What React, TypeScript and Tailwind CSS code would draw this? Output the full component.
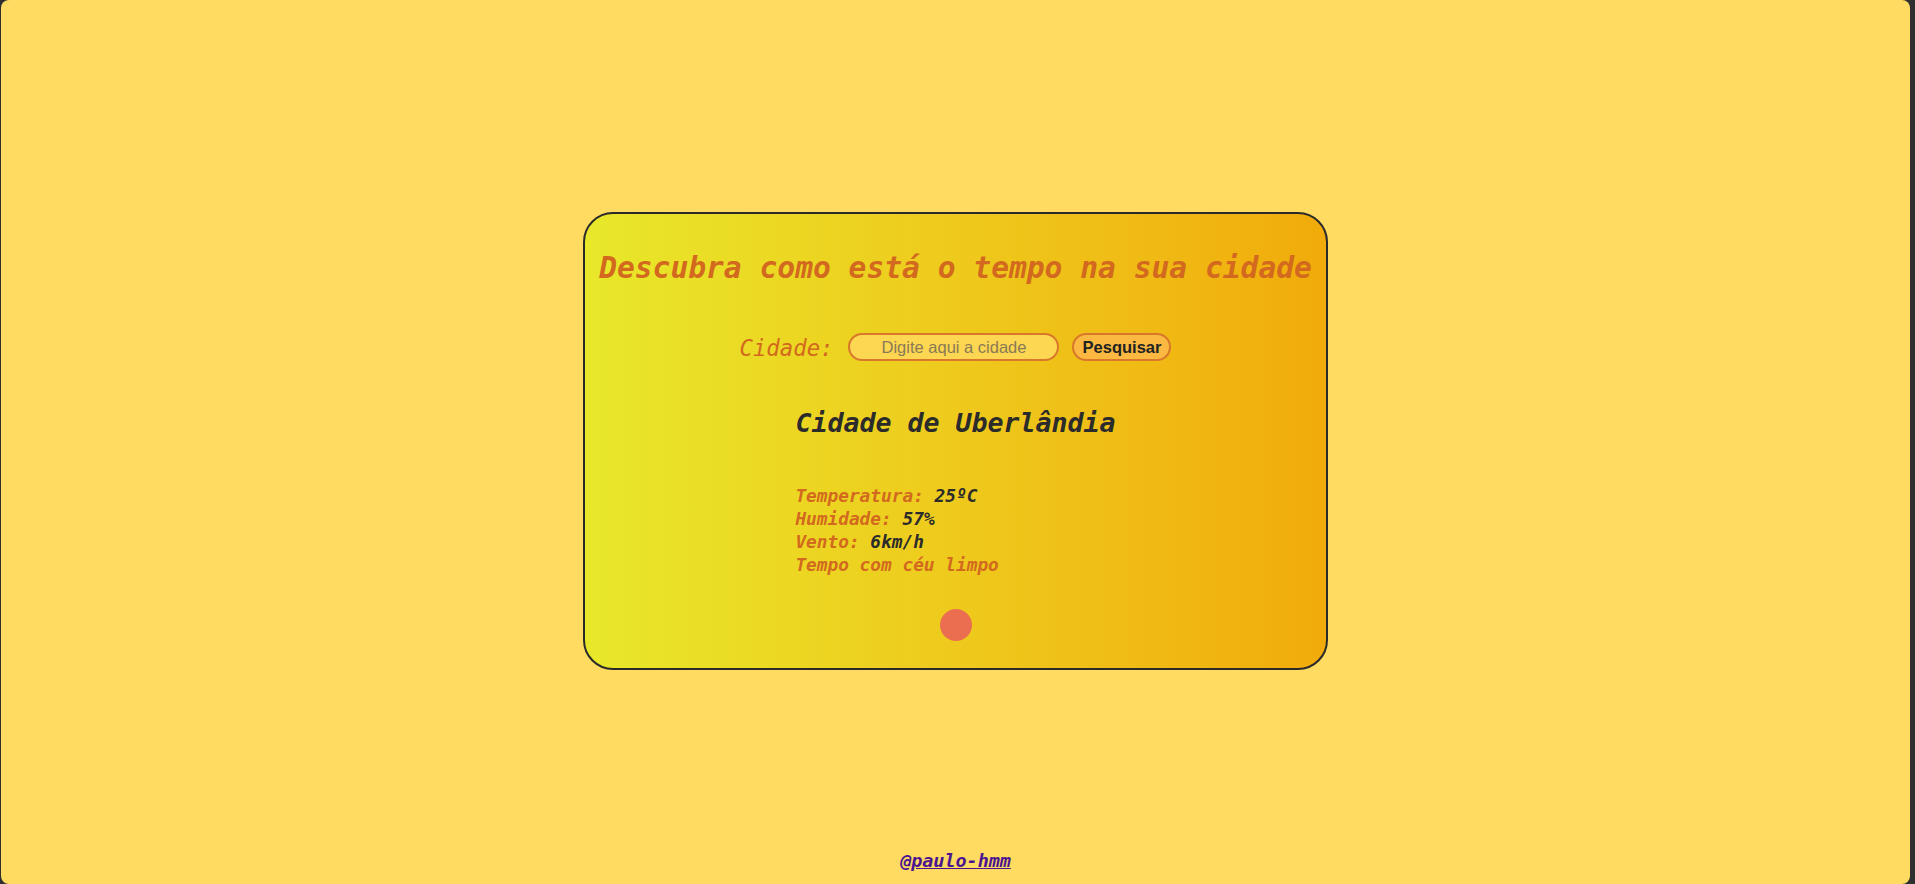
import React from "react";

const mono = "font-['DejaVu_Sans_Mono','Liberation_Mono',monospace]";

const weather = [
  { label: "Temperatura:", value: "25ºC" },
  { label: "Humidade:", value: "57%" },
  { label: "Vento:", value: "6km/h" },
];

export default function App() {
  return (
    <div className="h-[884px] bg-[#2f2f2f] pl-px pr-[5px]">
      <main className="h-full bg-[#ffdb62] rounded-[8px] flex flex-col items-center">
        {/* Card */}
        <section className="mt-[212px] w-[745px] h-[458px] rounded-[30px] border-2 border-[#2a2a2a] bg-gradient-to-r from-[#e8e82a] to-[#f1ab0a] flex flex-col items-center">
          <h1 className={`${mono} mt-[36px] text-[29.6px] leading-[36px] font-bold italic text-[#d2691e] whitespace-nowrap`}>
            Descubra como está o tempo na sua cidade
          </h1>

          {/* Search */}
          <form className="mt-[47px] flex items-center h-[28px]" onSubmit={(e) => e.preventDefault()}>
            <label className={`${mono} pt-[4px] text-[22.3px] italic text-[#d2691e] mr-[15px]`}>Cidade:</label>
            <input
              type="text"
              placeholder="Digite aqui a cidade"
              className="w-[211px] h-[28px] rounded-full border-2 border-[#d9782a] bg-[#fdd652] text-center font-['Liberation_Sans',Arial,sans-serif] text-[16.5px] text-[#333] placeholder:text-[#8a7a55] outline-none"
            />
            <button
              type="submit"
              className="ml-[13px] w-[99px] h-[28px] rounded-full border-2 border-[#d9782a] bg-[#fbb941] font-['Liberation_Sans',Arial,sans-serif] text-[16.5px] font-bold text-[#222]"
            >
              Pesquisar
            </button>
          </form>

          {/* Weather data */}
          <div className={`${mono} mt-[46px] flex flex-col items-start italic font-bold`}>
            <h2 className="text-[26.6px] leading-[32px] text-[#2b2b2b]">Cidade de Uberlândia</h2>
            <div className="mt-[45px] text-[17.8px] leading-[23px]">
              {weather.map((w) => (
                <p key={w.label}>
                  <span className="text-[#d2691e]">{w.label}</span>{" "}
                  <span className="text-[#2b2b2b]">{w.value}</span>
                </p>
              ))}
              <p className="text-[#d2691e]">Tempo com céu limpo</p>
            </div>
          </div>

          <div className="mt-[33px] w-[32px] h-[32px] rounded-full bg-[#ec6e50]" />
        </section>

        <a href="#" className={`${mono} mt-auto mb-[11px] text-[18.4px] leading-[24px] font-bold italic underline text-[#4b1590]`}>
          @paulo-hmm
        </a>
      </main>
    </div>
  );
}
